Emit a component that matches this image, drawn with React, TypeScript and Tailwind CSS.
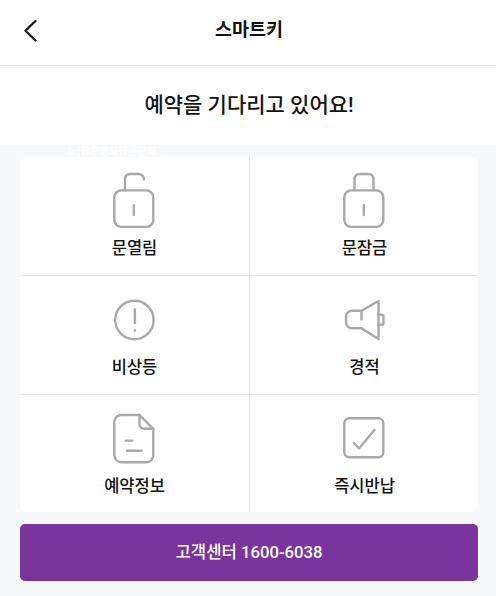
import type { ReactNode } from 'react';

interface KeyAction {
  label: string;
  icon: ReactNode;
}

const ACTIONS: KeyAction[] = [
  {
    label: '문열림',
    icon: (
      <>
        <rect x="4.3" y="20.4" width="39" height="36.5" rx="7" />
        <path d="M15 20V9a5 5 0 0 1 5-5h8.500a5.500 5.500 0 0 1 5.500 5.500" />
        <path d="M23.800 35.200v9.800" />
      </>
    ),
  },
  {
    label: '문잠금',
    icon: (
      <>
        <rect x="4.3" y="20.4" width="39" height="36.5" rx="7" />
        <path d="M14.500 20V9a5 5 0 0 1 5-5h9a5 5 0 0 1 5 5v11" />
        <path d="M23.800 35.200v9.800" />
      </>
    ),
  },
  {
    label: '비상등',
    icon: (
      <>
        <circle cx="24.4" cy="31" r="19.2" />
        <path d="M24.900 20.500v13.500" />
        <circle cx="24.9" cy="41.500" r="0.6" fill="#a9a9a9" strokeWidth="1.6" />
      </>
    ),
  },
  {
    label: '경적',
    icon: (
      <>
        <path d="M38.500 12v38L21.500 39.300h-9.500a6 6 0 0 1-6-6v-5.600a6 6 0 0 1 6-6h9.500z" />
        <path d="M21.500 22v8.300" />
        <path d="M38.500 25.700h3a2 2 0 0 1 2 2v6a2 2 0 0 1-2 2h-3" />
      </>
    ),
  },
  {
    label: '예약정보',
    icon: (
      <>
        <path d="M29.500 7H11.300a7 7 0 0 0-7 7v33.300a7 7 0 0 0 7 7h25a7 7 0 0 0 7-7V20.800z" />
        <path d="M29.500 7v8.800a5 5 0 0 0 5 5h8.800" />
        <path d="M15.700 32.600h6.800M17 42.800h14.500" />
      </>
    ),
  },
  {
    label: '즉시반납',
    icon: (
      <>
        <rect x="4.3" y="10.3" width="39" height="39" rx="5" />
        <path d="M13.800 35l5.200 5.500 15.500-18.500" />
      </>
    ),
  },
];

function ActionButton({ label, icon }: KeyAction) {
  return (
    <button className="flex flex-col items-center bg-white pt-[13px]">
      <svg
        className="mr-[2px] h-[60px] w-12"
        viewBox="0 0 48 60"
        fill="none"
        stroke="#a9a9a9"
        strokeWidth="2.4"
        strokeLinecap="round"
        strokeLinejoin="round"
      >
        {icon}
      </svg>
      <span className="mt-[7px] text-[16.5px] leading-6 font-medium">{label}</span>
    </button>
  );
}

export default function App() {
  return (
    <div className="flex h-[596px] w-[496px] flex-col bg-[#f6f8fa] font-[Roboto,'Noto_Sans_CJK_KR',sans-serif] text-[#121212]">
      {/* Header */}
      <header className="grid h-[66px] grid-cols-[61px_1fr_59px] items-center border-b border-[#e3e3e3] bg-white pb-[6px]">
        <button className="flex pl-[23px]" aria-label="뒤로">
          <svg className="h-6 w-4" viewBox="0 0 16 24" fill="none" stroke="#1c1c1c" strokeWidth="2.3" strokeLinecap="round" strokeLinejoin="round">
            <path d="M12.500 3L2.500 12.700 12.500 22.500" />
          </svg>
        </button>
        <h1 className="text-center text-[18.5px] leading-7 font-bold">스마트키</h1>
      </header>

      {/* Status message */}
      <section className="flex h-[79px] items-center justify-center bg-white pb-[2px] pl-[2px]">
        <p className="text-[21px] leading-8 font-medium">예약을 기다리고 있어요!</p>
      </section>

      <main className="relative flex flex-col pt-3 pr-[18px] pl-5">
        <span className="absolute top-0 left-[68px] text-[10.5px] leading-[14px] font-bold tracking-[-0.2px] whitespace-nowrap text-white">
          (c)팝콘영화팝콘만화
        </span>

        <div className="grid h-[355px] grid-cols-[229px_229px] grid-rows-[118px_118px_117px] gap-px overflow-hidden rounded-[5px] bg-[#e6e6e6]">
          {ACTIONS.map((action) => (
            <ActionButton key={action.label} {...action} />
          ))}
        </div>

        <button className="mt-3 h-[57px] rounded-[5px] bg-[#79349e] pt-px text-[16.7px] font-medium text-white">
          고객센터 1600-6038
        </button>
      </main>
    </div>
  );
}
